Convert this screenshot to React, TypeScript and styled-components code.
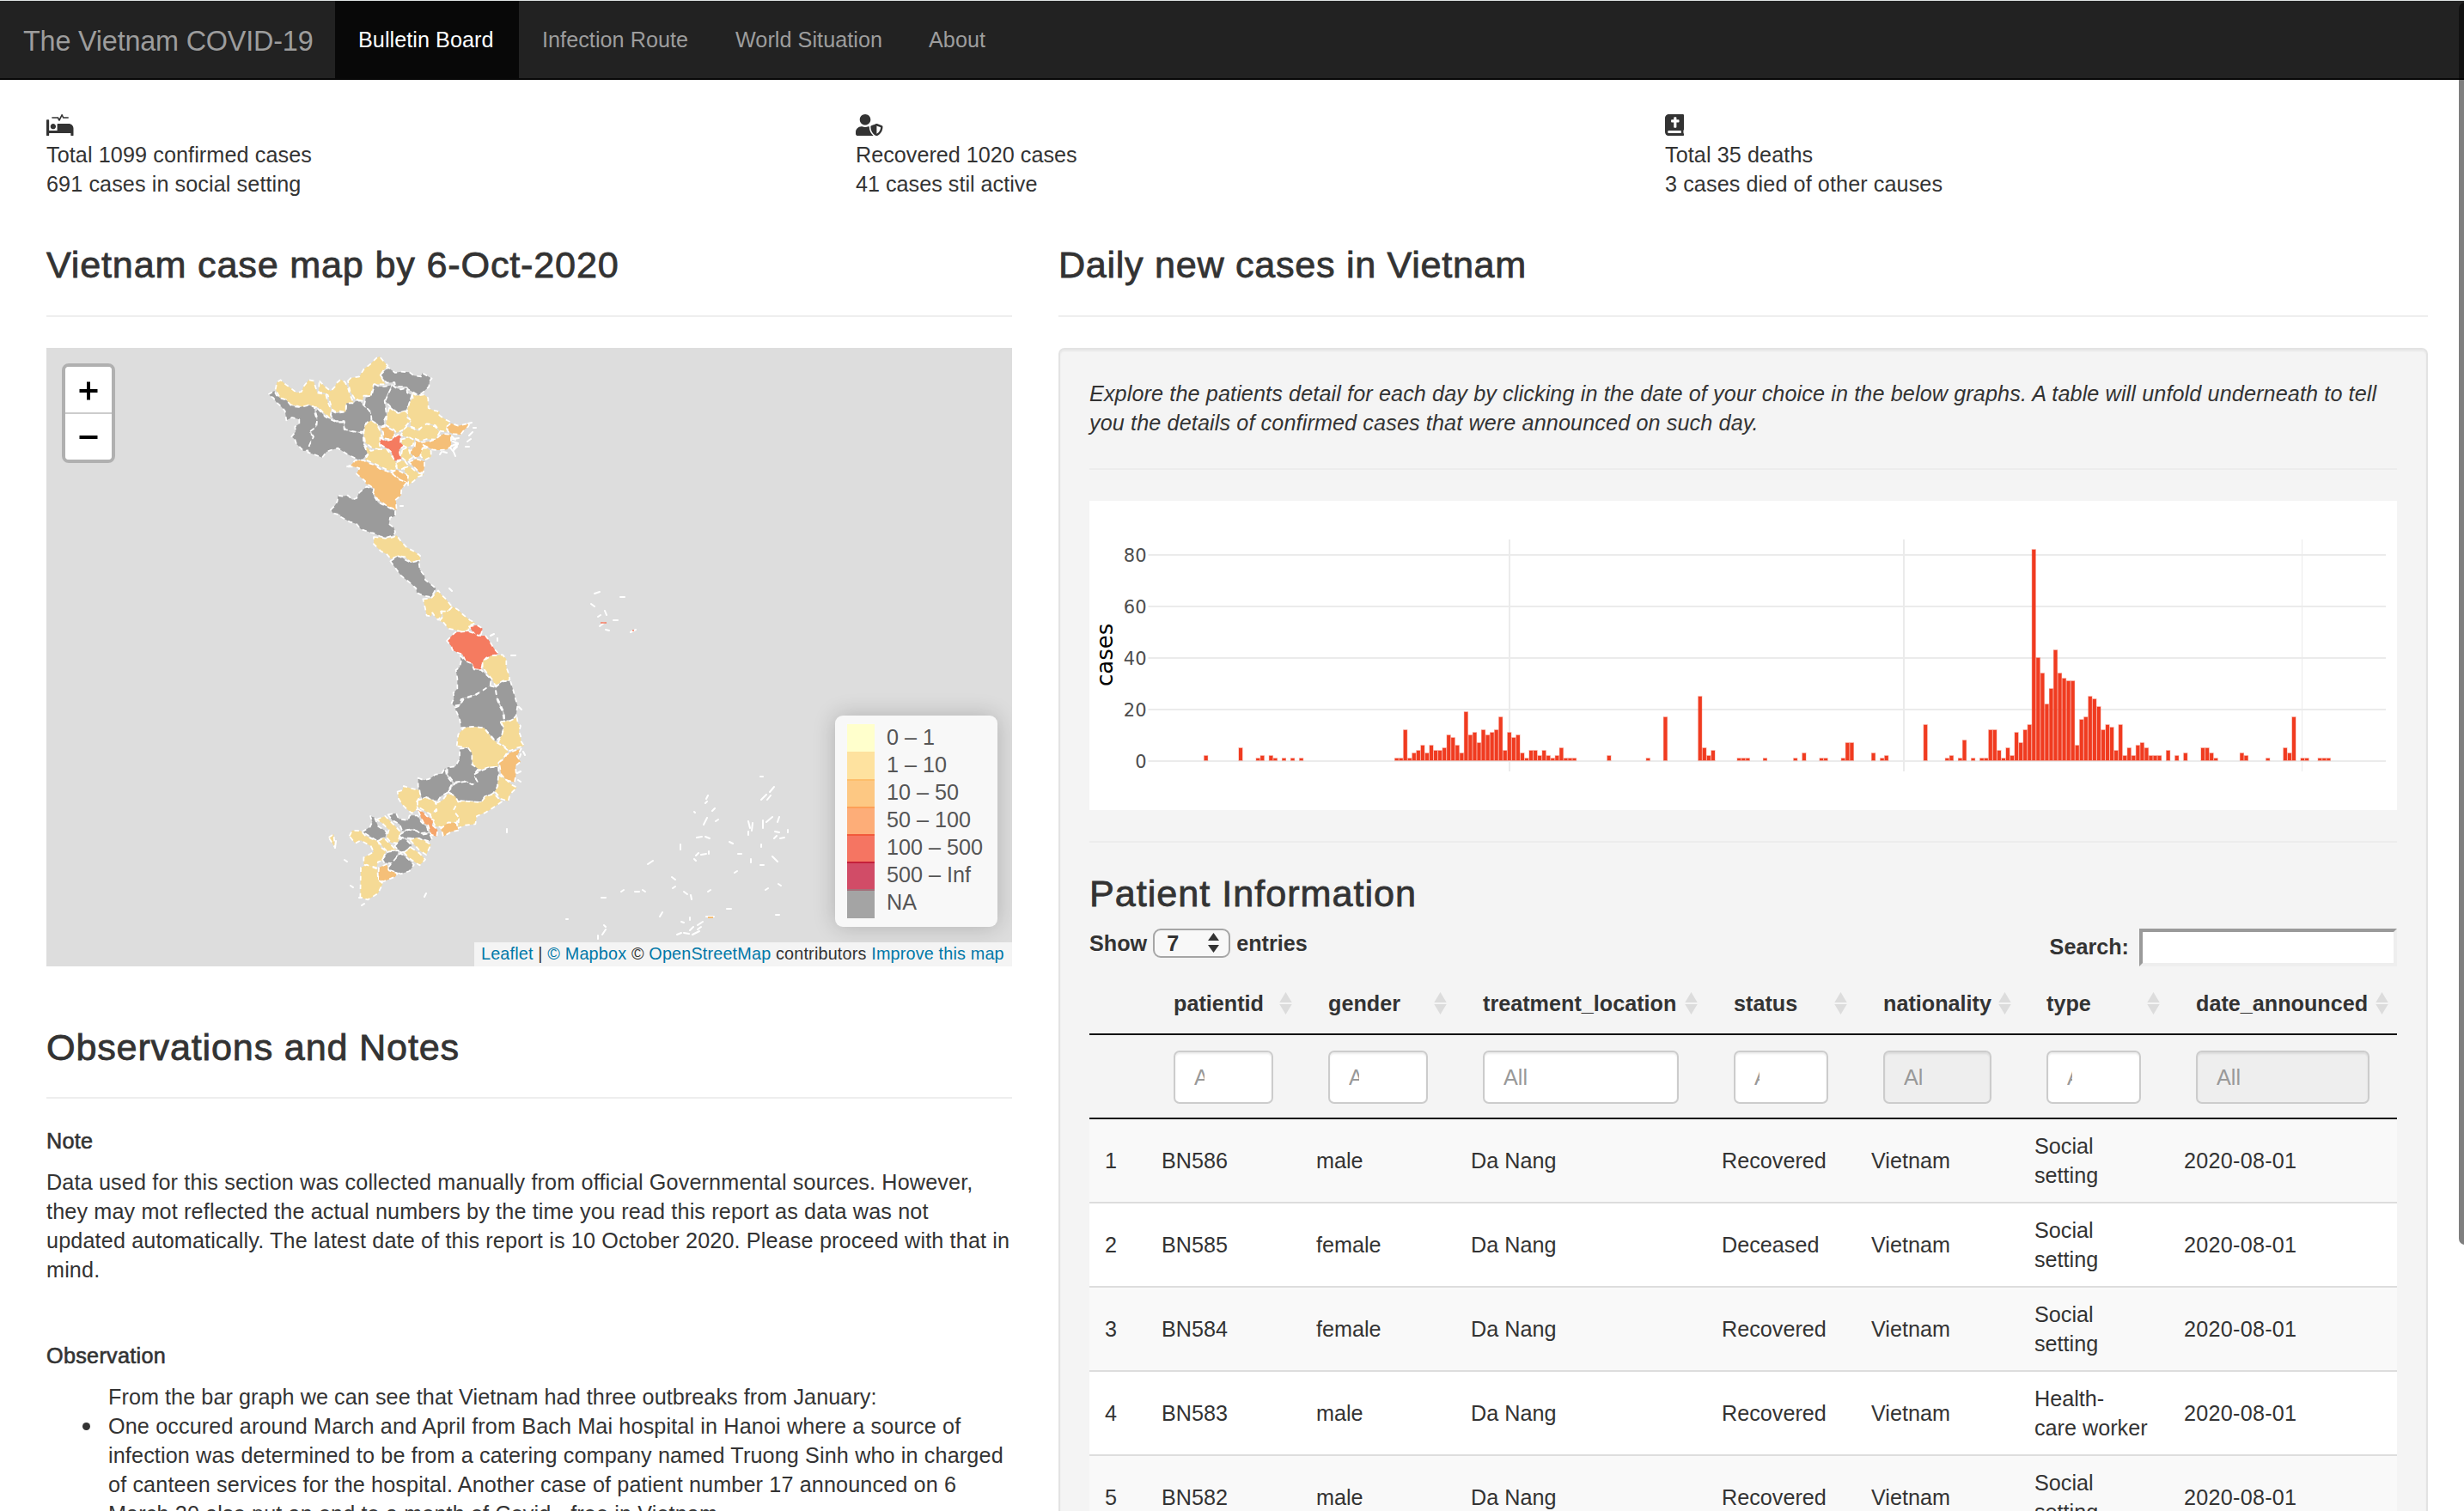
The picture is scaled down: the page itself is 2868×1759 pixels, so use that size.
import React from "react";
import styled, { createGlobalStyle } from "styled-components";
import { FaProcedures, FaUserShield, FaBible } from "react-icons/fa";

const GlobalStyle = createGlobalStyle`
  *, *::before, *::after { box-sizing: border-box; }
  html, body { margin: 0; padding: 0; overflow: hidden; background: #fff; }
  body {
    font-family: "Liberation Sans", Arial, Helvetica, sans-serif;
    font-size: 25.2px;
    line-height: 34px;
    color: #333;
  }
`;

const Page = styled.div`
  position: relative;
  width: 2868px;
  height: 1759px;
  overflow: hidden;
  display: flex;
  flex-direction: column;
`;

const Navbar = styled.nav`
  flex: none;
  display: flex;
  height: 93px;
  background: #222;
  border-top: 1px solid #dfe3e3;
  border-bottom: 2px solid #080808;
`;

const Brand = styled.div`
  width: 390px;
  padding-left: 27px;
  font-size: 32.4px;
  line-height: 94px;
  letter-spacing: -0.2px;
  color: #9d9d9d;
  white-space: nowrap;
`;

const NavLink = styled.a<{ $active?: boolean; $w: number }>`
  width: ${(p) => p.$w}px;
  padding-left: 27px;
  line-height: 90px;
  white-space: nowrap;
  letter-spacing: 0.05px;
  color: ${(p) => (p.$active ? "#fff" : "#9d9d9d")};
  background: ${(p) => (p.$active ? "#080808" : "transparent")};
`;

const ScrollThumb = styled.div`
  position: absolute;
  top: 3px;
  right: -8px;
  width: 14px;
  height: 1446px;
  border-radius: 7px;
  background: rgba(0, 0, 0, 0.5);
`;

const Stats = styled.section`
  flex: none;
  display: grid;
  grid-template-columns: 942px 942px 1fr;
  padding: 36px 0 0 54px;
`;

const StatIcon = styled.div<{ $w: number }>`
  height: 34px;
  padding-top: 4px;
  svg {
    display: block;
    width: ${(p) => p.$w}px;
    height: 25.2px;
  }
`;

const Columns = styled.main`
  flex: none;
  display: grid;
  grid-template-columns: 1124px 1594px;
  column-gap: 54px;
  padding: 53px 0 0 54px;
  align-items: start;
`;

const Title = styled.h3<{ $mt?: number; $ls?: number }>`
  margin: ${(p) => p.$mt ?? 0}px 0 0;
  height: 48px;
  font-size: 43.2px;
  line-height: 49px;
  font-weight: 400;
  letter-spacing: ${(p) => p.$ls ?? 0.8}px;
  -webkit-text-stroke: 0.8px #333;
  white-space: nowrap;
`;

const Rule = styled.hr<{ $top?: number; $bottom?: number }>`
  height: 2px;
  border: 0;
  background: #eee;
  margin: ${(p) => p.$top ?? 35}px 0 ${(p) => p.$bottom ?? 36}px;
`;

const SubTitle = styled.h5<{ $mt?: number }>`
  margin: ${(p) => p.$mt ?? 0}px 0 17px;
  height: 28px;
  font-size: 25.2px;
  line-height: 29.5px;
  font-weight: 400;
  letter-spacing: 0.3px;
  -webkit-text-stroke: 0.6px #333;
`;

const Para = styled.p<{ $ls?: number }>`
  margin: 0;
  white-space: nowrap;
  letter-spacing: ${(p) => p.$ls ?? 0.09}px;
`;

const Intro = styled(Para)`
  font-style: italic;
`;

const NoteList = styled.ul`
  margin: 0;
  padding: 0 0 0 72px;
  list-style: none;
  white-space: nowrap;
  letter-spacing: 0.06px;
`;

const NoteItem = styled.li`
  position: relative;
  letter-spacing: 0.13px;
  &::before {
    content: "";
    position: absolute;
    left: -30px;
    top: 13px;
    width: 9px;
    height: 9px;
    border-radius: 50%;
    background: #333;
  }
`;

/* ---------- map ---------- */

const MapFrame = styled.div`
  position: relative;
  height: 720px;
  background: #ddd;
  overflow: hidden;
  > svg { display: block; width: 1124px; height: 720px; }
`;

const ZoomControl = styled.div`
  position: absolute;
  left: 18px;
  top: 18px;
  width: 62px;
  border: 4px solid rgba(0, 0, 0, 0.2);
  background-clip: padding-box;
  border-radius: 8px;
`;

const ZoomButton = styled.div`
  height: 53px;
  display: flex;
  align-items: center;
  justify-content: center;
  background: #fff;
  color: #000;
  border-radius: 0 0 4px 4px;
  &:first-child {
    height: 55px;
    padding-top: 2px;
    border-bottom: 2px solid #ccc;
    border-radius: 4px 4px 0 0;
  }
  svg { display: block; }
`;

const Legend = styled.div`
  position: absolute;
  left: 918px;
  top: 428px;
  width: 189px;
  height: 246px;
  padding: 10px 0 0 14px;
  border-radius: 9px;
  background: #f8f8f8;
  box-shadow: 0 0 27px rgba(0, 0, 0, 0.2);
  color: #555;
`;

const LegendRow = styled.div<{ $color: string; $edge?: string }>`
  display: flex;
  height: 32px;
  line-height: 31px;
  &::before {
    content: "";
    width: 32px;
    height: 34px;
    margin-right: 14px;
    background: ${(p) => p.$color};
    border-top: 2px solid ${(p) => p.$edge ?? p.$color};
  }
`;

const Attribution = styled.div`
  position: absolute;
  right: 0;
  bottom: 0;
  height: 28px;
  width: 626px;
  padding-left: 8px;
  background: #f4f4f4;
  font-size: 19.8px;
  line-height: 27px;
  letter-spacing: 0.18px;
  white-space: nowrap;
  a { color: #0078a8; }
`;

const COLORS = { y: "#f5da95", o: "#f5bf78", c: "#f6a56b", r: "#f57b60", g: "#9b9b9b" };
type Region = [keyof typeof COLORS, string];

const NORTH: Region[] = [
  ["y", "92,160 97,135 110,127 128,143 145,155 165,171 183,168 190,150 208,127 225,130 238,172 258,176 268,178 275,205 288,235 282,262 270,250 258,240 240,222 228,222 210,213 195,222 175,220 160,215 145,215 130,197 108,190"],
  ["y", "245,130 262,148 285,166 300,150 305,138 320,125 335,135 345,155 352,178 365,208 338,210 338,240 318,236 305,240 290,230 275,180 262,172 243,170"],
  ["y", "345,130 355,120 385,115 400,90 425,70 445,50 455,45 470,62 484,77 470,92 458,110 475,142 435,142 425,182 400,182 395,200 370,195 352,165"],
  ["g", "458,110 485,83 510,102 530,98 560,100 575,112 600,115 605,103 638,122 630,130 628,150 605,172 590,180 570,168 555,160 548,150 525,150 510,148 508,135 480,137"],
  ["g", "67,178 88,165 95,180 108,190 130,197 145,215 160,220 175,222 210,215 228,222 230,245 238,270 228,300 210,310 225,325 215,345 212,372 190,375 180,365 165,350 160,335 148,325 162,308 160,290 175,280 175,265 150,258 130,268 125,235 110,218 95,205 85,190"],
  ["g", "240,228 252,240 265,255 285,265 305,275 330,275 332,300 365,308 385,308 398,318 400,350 415,385 390,410 370,400 340,385 310,365 285,372 270,378 255,398 235,390 205,380 210,355 225,325 215,305 235,290 238,260 232,240"],
  ["g", "288,235 305,243 338,238 340,208 365,208 378,195 390,205 402,217 425,240 428,270 408,278 400,308 370,308 335,300 332,270 300,270 285,250"],
  ["g", "438,142 455,150 472,150 500,145 485,178 473,200 480,250 470,270 473,288 450,285 428,270 425,240 402,215 408,185 428,182"],
  ["g", "500,145 512,155 530,160 550,155 552,172 568,180 562,200 558,215 545,235 520,243 498,225 475,200 485,178"],
  ["y", "568,172 585,182 610,178 625,190 626,225 640,232 665,238 664,250 680,262 700,272 692,290 688,308 665,305 650,285 625,280 590,300 565,290 562,268 550,240 560,205 572,190"],
  ["y", "490,222 505,235 520,243 550,235 552,258 565,268 545,290 540,300 515,312 505,300 478,285 480,255"],
  ["y", "540,300 550,290 570,295 590,305 605,290 620,280 650,290 665,310 650,335 620,333 600,340 580,332 560,330 530,320"],
  ["y", "405,285 415,272 430,270 445,280 455,300 465,330 455,350 460,370 430,365 405,345 400,310"],
  ["o", "460,292 478,290 505,305 508,322 495,335 470,330 468,310"],
  ["y", "530,335 560,328 577,337 572,355 550,362 535,355"],
  ["y", "535,370 555,362 562,385 570,398 550,412 530,395"],
  ["r", "457,328 475,340 500,335 510,325 520,318 530,325 528,345 540,358 524,370 526,385 532,405 505,410 498,380 480,365 458,352"],
  ["o", "600,345 628,342 650,335 665,322 680,315 705,318 705,360 690,370 660,372 640,370 610,355"],
  ["o", "690,290 705,278 730,287 770,278 765,290 752,300 738,318 712,315 695,308"],
  ["o", "582,335 600,345 612,358 600,390 580,400 560,378 578,360"],
  ["y", "605,365 620,365 635,375 635,395 612,407 598,392"],
  ["o", "557,413 585,403 612,412 612,432 608,450 595,450 570,425"],
  ["y", "400,350 415,365 425,375 445,370 480,368 500,395 515,420 510,445 480,440 440,420 405,405 415,388"],
  ["y", "515,415 530,408 545,412 555,425 530,440 515,435"],
  ["y", "540,435 560,428 580,445 590,452 612,458 590,465 575,480 555,495 556,470 545,450"],
  ["o", "497,450 515,440 530,448 555,462 553,487 525,475"],
  ["o", "340,430 355,425 370,408 400,408 420,418 440,425 460,440 480,445 500,455 525,475 550,485 532,508 530,530 512,545 515,582 500,575 485,570 465,555 450,545 432,520 435,505 420,495 407,490 405,480 375,455 385,435 365,430"],
  ["g", "285,580 300,565 308,550 310,530 325,533 345,530 360,545 375,540 385,520 410,500 435,508 432,525 450,555 480,568 510,585 510,602 492,608 488,630 505,642 510,658 505,670 475,678 455,672 435,662 425,660 390,648 375,630 350,622 320,605 318,598 292,592"],
  ["y", "435,675 455,677 475,680 500,677 515,670 530,690 550,712 575,725 597,740 598,757 565,765 545,745 520,742 495,752 480,735 460,725 435,700"],
  ["g", "493,760 520,742 535,748 545,755 565,765 592,758 596,790 612,810 615,825 640,845 652,855 645,870 635,885 608,880 585,870 583,855 565,838 530,810"],
];

const CENTRAL: Region[] = [
  ["y", "397,292 425,290 440,272 450,262 462,278 475,290 498,318 485,335 460,335 462,350 450,365 440,355 430,340 425,352 410,350 405,325"],
  ["y", "460,335 485,335 500,318 520,330 535,345 560,365 580,375 560,385 555,402 530,406 510,400 485,395 470,375 455,368 468,352"],
  ["r", "558,388 585,383 605,395 600,415 580,418 570,405"],
  ["r", "480,438 510,408 555,405 575,412 590,420 615,420 630,440 645,465 660,482 640,492 620,495 607,508 600,540 575,537 568,520 545,508 535,485 515,478 500,470 495,455"],
  ["y", "605,530 605,510 635,490 675,487 688,502 688,530 697,555 700,575 675,578 650,595 640,575 620,550"],
  ["g", "527,490 545,508 568,518 575,538 600,540 635,572 632,592 610,612 580,625 545,637 530,642 525,662 505,665 497,655 505,640 503,620 517,605 517,570 512,540 525,530 530,510"],
  ["g", "508,672 525,665 540,640 580,628 605,612 630,595 650,600 655,640 662,660 675,685 680,715 668,722 678,745 672,770 650,788 635,770 610,742 570,738 530,742 525,710"],
  ["g", "650,600 675,580 702,578 712,610 720,640 727,665 722,700 705,718 682,718 680,690 665,655 655,635"],
  ["y", "668,720 700,718 725,705 728,725 738,735 732,755 738,770 740,790 750,805 725,812 700,822 685,810 660,790 672,768 680,742"],
  ["y", "515,805 520,765 540,742 570,738 610,742 630,768 650,790 675,805 695,822 680,845 660,865 660,878 625,880 590,890 570,872 565,825 550,812"],
  ["o", "663,862 680,850 690,835 715,822 740,815 725,840 738,860 720,875 722,900 717,932 690,925 670,905"],
];

const SOUTH: Region[] = [
  ["g", "525,95 555,92 568,110 568,150 590,165 575,185 587,210 575,222 540,208 505,212 482,182 482,160 510,157 525,130"],
  ["g", "485,245 510,215 545,210 570,220 587,210 575,185 600,172 630,160 660,158 662,185 655,235 640,252 612,262 600,282 545,278 510,275 505,258"],
  ["y", "660,185 690,205 705,220 725,230 700,255 695,278 670,270 648,245 658,225"],
  ["y", "515,280 545,278 600,282 615,262 645,252 672,280 640,302 615,318 585,330 580,358 545,362 520,372 522,340 500,315"],
  ["g", "380,197 400,205 420,200 440,185 462,182 475,162 480,190 500,215 480,250 460,260 450,275 425,275 415,262 395,270 385,250 380,225"],
  ["y", "308,245 325,240 330,225 350,232 385,240 388,260 375,280 378,305 358,320 340,305 325,290 312,270"],
  ["y", "378,275 395,270 410,265 440,280 445,305 425,325 400,310 378,297"],
  ["y", "443,285 465,275 480,255 495,252 510,262 520,280 503,310 522,335 515,352 485,355 465,370 440,365 430,345 422,325 445,312"],
  ["c", "378,305 400,318 410,330 435,345 428,360 448,378 445,402 425,395 415,362 400,355 390,335"],
  ["o", "458,375 485,352 515,355 520,380 495,385 468,402 465,388"],
  ["g", "275,325 303,320 312,340 345,345 350,328 378,328 390,350 412,370 415,387 390,390 360,375 325,382 315,358 290,345"],
  ["g", "315,395 345,378 375,382 395,395 420,390 428,410 418,418 385,408 360,408 318,405"],
  ["y", "235,342 265,330 280,345 300,365 318,385 310,425 285,422 270,405 278,378 255,355"],
  ["g", "185,385 212,368 220,350 213,330 228,335 240,365 270,385 265,405 235,415 210,400"],
  ["y", "140,400 150,380 180,382 195,398 220,410 240,418 250,440 268,452 255,485 240,490 235,510 190,500 190,475 225,455 215,435 180,415 160,425"],
  ["y", "240,418 260,406 285,430 305,450 270,452"],
  ["g", "298,435 325,405 340,415 358,432 340,452 320,457"],
  ["y", "350,412 375,405 400,415 425,430 408,465 385,450"],
  ["y", "330,457 355,440 385,460 405,482 385,502 350,478"],
  ["g", "255,482 275,455 312,450 303,480 290,495 262,493"],
  ["g", "275,510 300,480 318,460 340,475 365,500 350,522 320,532 280,518"],
  ["o", "240,555 243,510 270,498 278,520 308,530 300,542 260,558"],
  ["y", "178,615 180,510 200,500 238,515 240,552 257,565 240,600 205,622"],
  ["y", "68,405 85,393 90,440"],
];

/* Islets, as short strokes in map pixels: x, y, dx, dy */
const ISLETS: number[][] = [
  [692, 691, 6, -2], [722, 695, 5, 0], [688, 703, 4, 3], [696, 718, 3, -2], [704, 711, 2, 5], [714, 722, 5, 0], [698, 729, 5, -4], [705, 733, 4, 1], [734, 736, 6, -3],
  [885, 904, 3, 0], [896, 922, 5, -6], [886, 931, 6, -6], [893, 931, 4, -5], [822, 930, 2, -4], [821, 935, 2, -2], [808, 945, 1, 1], [829, 944, 3, -3], [833, 956, 3, -2],
  [819, 960, 4, -8], [871, 956, 2, 8], [876, 958, -1, 9], [888, 955, 0, 9], [892, 957, 7, -6], [907, 951, -2, 6], [811, 975, 6, -1], [821, 974, 5, 2], [871, 968, 0, 4],
  [902, 968, 5, 1], [901, 976, 3, -3], [908, 976, 5, -1], [917, 966, 0, 3], [792, 983, 0, 6], [849, 980, 4, 2], [859, 994, 4, 0], [886, 983, 0, 3],
  [810, 996, 3, -3], [816, 995, 6, -1], [825, 991, 0, 3], [808, 1000, 2, 2], [874, 1000, 0, 4], [899, 997, 6, 6], [754, 1006, 6, -4], [855, 1016, 3, -2], [885, 1007, 4, 0],
  [782, 1021, 4, 3], [783, 1034, 3, -2], [723, 1038, 3, -2], [739, 1038, 5, 0], [748, 1036, 3, 2], [700, 1045, 5, 0], [796, 1038, 4, 3], [804, 1042, 1, 5], [824, 1038, 3, -2],
  [891, 1036, 3, -2], [906, 1029, 3, 2], [846, 1058, 5, 0], [903, 1065, 4, 0], [768, 1067, 3, -5], [793, 1073, 3, 1], [803, 1068, 0, 3], [822, 1067, 9, 0],
  [703, 1077, 2, 2], [705, 1082, -4, 6], [696, 1089, 0, 4], [788, 1088, 5, -2], [796, 1086, 6, 1], [803, 1083, 4, -4], [812, 1077, 6, -4], [806, 1088, 8, -4], [812, 1082, 4, -3], [659, 1070, 2, 0],
  [466, 589, 3, 0], [523, 685, 3, 3], [571, 740, 4, -2], [579, 743, 0, 3], [595, 763, 5, 0], [590, 965, 0, 4], [401, 1001, 3, 2], [408, 1031, 3, 2], [421, 1054, 3, -2], [494, 1044, 2, -4], [390, 987, 1, -8],
  [604, 823, 3, 3], [606, 878, -1, 3], [602, 900, 4, -2], [603, 908, 3, 2], [609, 875, 2, 4], [418, 1045, 3, 0],
  [526, 508, 4, 4], [527, 514, 6, 2], [526, 519, 7, -3], [528, 524, 4, -4], [530, 531, -2, -5], [524, 521, 3, 4], [527, 511, 7, -1], [533, 517, -5, 5], [544, 514, 4, -3], [542, 520, 4, 0], [546, 507, 4, -4], [551, 498, 3, 0], [516, 526, 4, 1], [512, 529, 2, -3], [545, 493, 4, -1],
];

function Regions({ items, x, y }: { items: Region[]; x: number; y: number }) {
  return (
    <g transform={`translate(${x} ${y}) scale(0.33333)`}>
      {items.map(([c, pts], i) => (
        <polygon key={i} points={pts} fill={COLORS[c]} stroke="#fff" strokeWidth={5.2} strokeDasharray="16 14" strokeLinejoin="round" />
      ))}
    </g>
  );
}

function CaseMap() {
  return (
    <svg viewBox="54 405 1124 720">
      <Regions items={NORTH} x={290} y={400} />
      <Regions items={CENTRAL} x={360} y={600} />
      <Regions items={SOUTH} x={360} y={840} />
      <path
        d={ISLETS.map(([x, y, dx, dy]) => `M${x} ${y}l${dx} ${dy}`).join("")}
        stroke="#fff"
        strokeWidth={2}
        strokeLinecap="round"
        fill="none"
      />
      <path d="M699 725h7M736 734h2" stroke="#f57b60" strokeWidth={1.6} />
      <path d="M824 1068h6" stroke="#f5bf78" strokeWidth={2} />
    </svg>
  );
}

const LEGEND = [
  { label: "0 – 1", color: "#ffffcc" },
  { label: "1 – 10", color: "#fee29f" },
  { label: "10 – 50", color: "#fdc883", edge: "#fdbe6b" },
  { label: "50 – 100", color: "#fdad78", edge: "#fd9f58" },
  { label: "100 – 500", color: "#f57562", edge: "#f25a3c" },
  { label: "500 – Inf", color: "#d14c67", edge: "#c5203a" },
  { label: "NA", color: "#a4a4a4", edge: "#a3707a" },
];

/* ---------- chart ---------- */

const ChartFrame = styled.div`
  height: 360px;
  background: #fff;
  svg { display: block; width: 1522px; height: 360px; }
`;

/* [first day relative to 1 April, cases on consecutive days] */
const SERIES: [number, number[]][] = [
  [-70, [2]], [-62, [5]], [-58, [1, 2]], [-55, [2, 1]], [-52, [1]], [-50, [1]], [-48, [1]],
  [-26, [1, 1, 12, 1, 3, 4, 6, 3, 6, 4, 4, 5, 10, 9, 6, 3, 19, 10, 11, 7, 12, 10, 11, 12, 17, 4, 11, 9, 10, 3, 1, 4, 4, 2, 4, 2, 1, 2, 5, 1, 1, 1]],
  [23, [2]], [32, [1]], [36, [17]], [44, [25, 5, 2, 4]], [53, [1, 1, 1]], [59, [1]], [66, [1]], [68, [3]], [72, [1, 1]], [77, [1, 7, 7]], [84, [3]], [86, [1, 2]],
  [96, [14]], [101, [1, 2]], [104, [1, 8]], [107, [1]],
  [109, [1, 1, 12, 12, 4, 1, 5, 2, 11, 7, 12, 14, 82, 40, 34, 22, 28, 43, 34, 32, 31, 31, 6, 16, 17, 25, 24, 21, 12, 14, 13, 4, 14, 2, 5, 2, 6, 7, 5, 2, 2, 2]],
  [152, [4]], [154, [2]], [156, [3]], [160, [5, 5, 3, 1]], [169, [3, 2]], [175, [1]], [179, [5, 3, 17]], [183, [1, 1]], [187, [1, 1, 1]],
];
const DAY = 5.045;
const APRIL_1 = 1756.8;

function CasesChart() {
  return (
    <svg viewBox="1268 583 1522 360">
      {[80, 60, 40, 20, 0].map((v) => (
        <g key={v}>
          <rect x={1336.5} y={885 - v * 3} width={1440.5} height={2} fill="#ebebeb" />
          <text x={1334.5} y={894 - v * 3} textAnchor="end" fontFamily="'DejaVu Sans', Verdana, sans-serif" fontSize={21} fill="#4d4d4d">
            {v}
          </text>
        </g>
      ))}
      <rect x={1756} y={628} width={2} height={270} fill="#ebebeb" />
      <rect x={2215} y={628} width={2} height={270} fill="#ebebeb" />
      <rect x={2679} y={628} width={1} height={270} fill="#ebebeb" />
      <text transform="translate(1295 799) rotate(-90)" fontFamily="'DejaVu Sans', Verdana, sans-serif" fontSize={26} fill="#000">
        cases
      </text>
      {SERIES.flatMap(([start, values]) =>
        values.map((v, i) => {
          const x = APRIL_1 + (start + i) * DAY;
          return (
            <g key={start + i} fill="#f03b20">
              <rect x={x - 2.5} y={885 - v * 3} width={DAY} height={v * 3 + 1} opacity={0.4} />
              <rect x={x - 2} y={886 - v * 3} width={4.05} height={v * 3 - 1} />
            </g>
          );
        })
      )}
    </svg>
  );
}

/* ---------- table ---------- */

const Well = styled.div`
  height: 1500px;
  padding: 34px;
  background: #f4f4f4;
  border: 2px solid #e3e3e3;
  border-radius: 7px;
  box-shadow: inset 0 2px 2px rgba(0, 0, 0, 0.05);
`;

const WellRule = styled(Rule)`
  background: #ececec;
`;

const Controls = styled.div`
  display: flex;
  justify-content: space-between;
  margin-top: 17px;
  height: 57px;
  font-weight: 700;
`;

const LengthLabel = styled.label`
  display: flex;
  height: 34px;
  gap: 7px;
`;

const LengthSelect = styled.div`
  width: 90px;
  height: 34px;
  padding: 0 11px 0 14px;
  display: flex;
  align-items: center;
  justify-content: space-between;
  border: 2px solid #a6a6a6;
  border-radius: 9px;
  background: #f8f8f8;
`;

const SearchLabel = styled.label`
  display: flex;
  gap: 12px;
  line-height: 43px;
`;

const SearchInput = styled.input`
  width: 300px;
  height: 44px;
  border: 4px solid;
  border-color: #9a9a9a #eee #eee #9a9a9a;
  background: #fff;
  border-radius: 0;
`;

const GRID = "70px 180px 180px 292px 174px 190px 174px 262px";

const HeadRow = styled.div`
  display: grid;
  grid-template-columns: ${GRID};
  height: 67px;
  border-bottom: 2px solid #111;
  font-weight: 700;
`;

const HeadCell = styled.div<{ $right?: number }>`
  display: flex;
  align-items: center;
  justify-content: space-between;
  height: 34px;
  margin-top: 13px;
  padding: 0 ${(p) => p.$right ?? 14}px 0 28px;
  white-space: nowrap;
  svg { flex: none; display: block; }
`;

const FilterRow = styled.div`
  display: grid;
  grid-template-columns: ${GRID};
  height: 98px;
  padding-top: 18px;
  border-bottom: 2px solid #111;
`;

const Filter = styled.div<{ $w: number; $off?: boolean }>`
  width: ${(p) => p.$w}px;
  height: 62px;
  margin-left: 28px;
  padding: 0 78px 0 22px;
  border: 2px solid #ccc;
  border-radius: 7px;
  background: ${(p) => (p.$off ? "#eee" : "#fff")};
  box-shadow: inset 0 2px 2px rgba(0, 0, 0, 0.075);
  color: #999;
  line-height: 58px;
`;

const Clip = styled.div`
  overflow: hidden;
  white-space: nowrap;
`;

const BodyRow = styled.div<{ $odd: boolean }>`
  display: grid;
  grid-template-columns: ${GRID};
  align-items: center;
  height: 98px;
  background: ${(p) => (p.$odd ? "#f9f9f9" : "#fff")};
  border-bottom: 2px solid #ddd;
`;

const Cell = styled.div<{ $pad?: number }>`
  padding-left: ${(p) => p.$pad ?? 14}px;
  white-space: pre;
  &:last-child { letter-spacing: 0.25px; }
`;

const HEADERS: { name: string; w: number; off?: boolean; right?: number }[] = [
  { name: "patientid", w: 116 },
  { name: "gender", w: 116 },
  { name: "treatment_location", w: 228 },
  { name: "status", w: 110 },
  { name: "nationality", w: 126, off: true, right: 13 },
  { name: "type", w: 110 },
  { name: "date_announced", w: 202, off: true, right: 10 },
];

const ROWS = [
  ["1", "BN586", "male", "Da Nang", "Recovered", "Vietnam", "Social\nsetting", "2020-08-01"],
  ["2", "BN585", "female", "Da Nang", "Deceased", "Vietnam", "Social\nsetting", "2020-08-01"],
  ["3", "BN584", "female", "Da Nang", "Recovered", "Vietnam", "Social\nsetting", "2020-08-01"],
  ["4", "BN583", "male", "Da Nang", "Recovered", "Vietnam", "Health-\ncare worker", "2020-08-01"],
  ["5", "BN582", "male", "Da Nang", "Recovered", "Vietnam", "Social\nsetting", "2020-08-01"],
];

function SortIcon() {
  return (
    <svg width="15" height="26" viewBox="0 0 15 26" fill="#dcdcdc">
      <path d="M7.5 0L14.7 12H.3z" />
      <path d="M7.5 26L14.7 14H.3z" />
    </svg>
  );
}

function PatientTable() {
  return (
    <div>
      <HeadRow>
        <span />
        {HEADERS.map((h) => (
          <HeadCell key={h.name} $right={h.right}>
            {h.name}
            <SortIcon />
          </HeadCell>
        ))}
      </HeadRow>
      <FilterRow>
        <span />
        {HEADERS.map((h) => (
          <Filter key={h.name} $w={h.w} $off={h.off}>
            <Clip>All</Clip>
          </Filter>
        ))}
      </FilterRow>
      {ROWS.map((row, r) => (
        <BodyRow key={row[0]} $odd={r % 2 === 0}>
          {row.map((value, c) => (
            <Cell key={c} $pad={c === 0 ? 18 : 14}>
              {value}
            </Cell>
          ))}
        </BodyRow>
      ))}
    </div>
  );
}

export default function App() {
  return (
    <Page>
      <GlobalStyle />
      <Navbar>
        <Brand>The Vietnam COVID-19</Brand>
        <NavLink $active $w={214}>Bulletin Board</NavLink>
        <NavLink $w={225}>Infection Route</NavLink>
        <NavLink $w={225}>World Situation</NavLink>
        <NavLink $w={122}>About</NavLink>
      </Navbar>

      <Stats>
        <div>
          <StatIcon $w={31.5}><FaProcedures /></StatIcon>
          <Para>Total 1099 confirmed cases<br />691 cases in social setting</Para>
        </div>
        <div>
          <StatIcon $w={31.5}><FaUserShield /></StatIcon>
          <Para $ls={0}>Recovered 1020 cases<br />41 cases stil active</Para>
        </div>
        <div>
          <StatIcon $w={22.05}><FaBible /></StatIcon>
          <Para>Total 35 deaths<br />3 cases died of other causes</Para>
        </div>
      </Stats>

      <Columns>
        <section>
          <Title>Vietnam case map by 6-Oct-2020</Title>
          <Rule />
          <MapFrame>
            <CaseMap />
            <ZoomControl>
              <ZoomButton>
                <svg width="22" height="22" viewBox="0 0 22 22"><path d="M11 0.5V21.5M0.5 11H21.5" stroke="#000" strokeWidth="4" /></svg>
              </ZoomButton>
              <ZoomButton>
                <svg width="22" height="22" viewBox="0 0 22 22"><path d="M0.5 11H21.5" stroke="#000" strokeWidth="4" /></svg>
              </ZoomButton>
            </ZoomControl>
            <Legend>
              {LEGEND.map((l) => (
                <LegendRow key={l.label} $color={l.color} $edge={l.edge}>{l.label}</LegendRow>
              ))}
            </Legend>
            <Attribution>
              <a>Leaflet</a> | <a>© Mapbox</a> © <a>OpenStreetMap</a> contributors <a>Improve this map</a>
            </Attribution>
          </MapFrame>

          <Title $mt={70}>Observations and Notes</Title>
          <Rule $top={34} $bottom={35} />
          <SubTitle>Note</SubTitle>
          <Para $ls={0.145}>
            Data used for this section was collected manually from official Governmental sources. However,<br />
            they may mot reflected the actual numbers by the time you read this report as data was not<br />
            updated automatically. The latest date of this report is 10 October 2020. Please proceed with that in<br />
            mind.
          </Para>
          <SubTitle $mt={69}>Observation</SubTitle>
          <NoteList>
            From the bar graph we can see that Vietnam had three outbreaks from January:
            <NoteItem>
              One occured around March and April from Bach Mai hospital in Hanoi where a source of<br />
              infection was determined to be from a catering company named Truong Sinh who in charged<br />
              of canteen services for the hospital. Another case of patient number 17 announced on 6<br />
              March 20 also put an end to a month of Covid - free in Vietnam.
            </NoteItem>
          </NoteList>
        </section>

        <section>
          <Title $ls={0.68}>Daily new cases in Vietnam</Title>
          <Rule />
          <Well>
            <Intro $ls={0.115}>
              Explore the patients detail for each day by clicking in the date of your choice in the below graphs. A table will unfold underneath to tell<br />
              you the details of confirmed cases that were announced on such day.
            </Intro>
            <WellRule $top={36} />
            <ChartFrame><CasesChart /></ChartFrame>
            <WellRule $top={36} $bottom={35} />
            <Title $ls={0.98}>Patient Information</Title>
            <Controls>
              <LengthLabel>
                Show
                <LengthSelect>
                  7
                  <svg width="13" height="24" viewBox="0 0 13 24" fill="#333">
                    <path d="M6.5 0L13 9H0z" />
                    <path d="M6.5 23L13 14H0z" />
                  </svg>
                </LengthSelect>
                entries
              </LengthLabel>
              <SearchLabel>
                Search:
                <SearchInput />
              </SearchLabel>
            </Controls>
            <PatientTable />
          </Well>
        </section>
      </Columns>
      <ScrollThumb />
    </Page>
  );
}
